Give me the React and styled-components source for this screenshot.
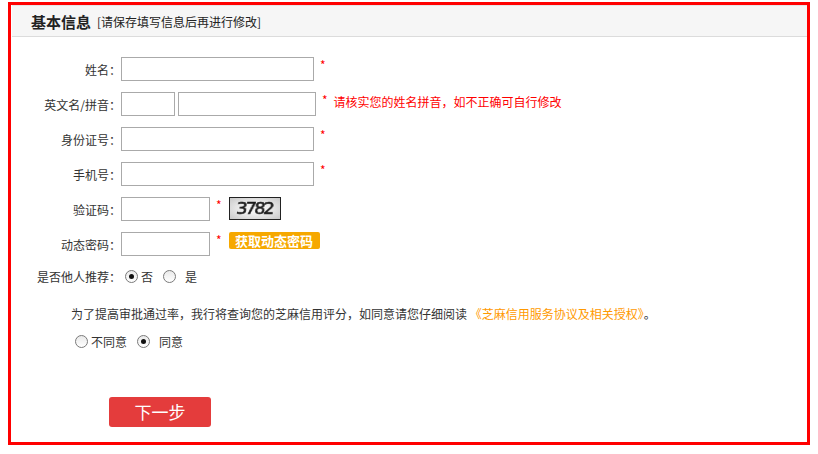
import React from "react";
import styled, { createGlobalStyle } from "styled-components";

const GlobalStyle = createGlobalStyle`
  body {
    margin: 0;
    font-family: "Noto Sans CJK SC", "Liberation Sans", sans-serif;
    font-size: 12px;
    color: #333;
    background: #fff;
  }
`;

const fields = [
  { label: "姓名：", width: 193 },
  { label: "身份证号：", width: 193 },
  { label: "手机号：", width: 193 },
];

const App = () => {
  return (
    <Page>
      <GlobalStyle />
      <Frame>
        <Header>
          <Title>基本信息</Title>
          <Note>[请保存填写信息后再进行修改]</Note>
        </Header>

        <Form>
          <Row>
            <Label>{fields[0].label}</Label>
            <Input $w={193} />
            <Star>*</Star>
          </Row>

          <Row>
            <Label>英文名/拼音：</Label>
            <Input $w={54} />
            <Input $w={138} $ml={3} />
            <Star>*</Star>
            <Hint>请核实您的姓名拼音，如不正确可自行修改</Hint>
          </Row>

          {fields.slice(1).map((f) => (
            <Row key={f.label}>
              <Label>{f.label}</Label>
              <Input $w={f.width} />
              <Star>*</Star>
            </Row>
          ))}

          <Row>
            <Label>验证码：</Label>
            <Input $w={89} />
            <Star>*</Star>
            <Captcha>
              <CaptchaText>3782</CaptchaText>
            </Captcha>
          </Row>

          <Row $mb={8}>
            <Label>动态密码：</Label>
            <Input $w={89} />
            <Star>*</Star>
            <CodeBtn>获取动态密码</CodeBtn>
          </Row>

          <Row>
            <Label>是否他人推荐：</Label>
            <Option $ml={4}>
              <Radio $checked />
              <OptText $ml={3}>否</OptText>
            </Option>
            <Option $ml={10}>
              <Radio />
              <OptText $ml={9}>是</OptText>
            </Option>
          </Row>

          <Agreement>
            <AgreeText>
              为了提高审批通过率，我行将查询您的芝麻信用评分，如同意请您仔细阅读{" "}
              <Link>《芝麻信用服务协议及相关授权》</Link>。
            </AgreeText>
            <AgreeRow>
              <Option $ml={4}>
                <Radio />
                <OptText $ml={3}>不同意</OptText>
              </Option>
              <Option $ml={10}>
                <Radio $checked />
                <OptText $ml={9}>同意</OptText>
              </Option>
            </AgreeRow>
          </Agreement>

          <NextBtn>下一步</NextBtn>
        </Form>
      </Frame>
    </Page>
  );
};

export default App;

const Page = styled.div`
  padding: 2px 8px 0;
`;

const Frame = styled.div`
  width: 802px;
  height: 443px;
  box-sizing: border-box;
  border: 3px solid #ff0000;
`;

const Header = styled.div`
  height: 30px;
  margin-left: 1px;
  padding-left: 19px;
  display: flex;
  align-items: center;
  background: #f6f6f6;
  border-top: 1px solid #e6e6e6;
  border-bottom: 1px solid #dcdcdc;
`;

const Title = styled.span`
  font-size: 15px;
  font-weight: bold;
  color: #222;
`;

const Note = styled.span`
  margin-left: 6px;
  font-size: 12px;
  color: #222;
`;

const Form = styled.div`
  padding-top: 20px;
`;

const Row = styled.div`
  display: flex;
  align-items: center;
  height: 24px;
  margin-bottom: ${(p) => (p.$mb !== undefined ? p.$mb : 11)}px;
`;

const Label = styled.div`
  width: 110px;
  text-align: right;
  color: #333;
  white-space: nowrap;
`;

const Input = styled.input`
  width: ${(p) => p.$w}px;
  height: 24px;
  margin: 0 0 0 ${(p) => p.$ml || 0}px;
  padding: 0 4px;
  box-sizing: border-box;
  border: 1px solid #aaa;
  outline: none;
  font-size: 12px;
`;

const Star = styled.span`
  align-self: flex-start;
  margin: 2px 0 0 6px;
  color: #f00;
  font-size: 12px;
  line-height: 12px;
`;

const Hint = styled.span`
  margin: -6px 0 0 6px;
  color: #f00;
  font-size: 12px;
`;

const Captcha = styled.div`
  align-self: flex-start;
  margin-left: 7px;
  width: 52px;
  height: 23px;
  box-sizing: border-box;
  border: 1px solid #222;
  background: radial-gradient(ellipse at center, #f4f4f4 30%, #c8c8c8 100%);
  display: flex;
  align-items: center;
  justify-content: center;
  overflow: hidden;
`;

const CaptchaText = styled.span`
  font-family: "DejaVu Sans", sans-serif;
  font-size: 16px;
  letter-spacing: -2px;
  color: #1a1a1a;
  -webkit-text-stroke: 0.6px #1a1a1a;
  transform: skewX(-6deg) scaleX(1.1);
  filter: blur(0.5px);
`;

const CodeBtn = styled.div`
  align-self: flex-start;
  margin-left: 7px;
  width: 91px;
  height: 17px;
  line-height: 17px;
  text-align: center;
  background: #f6a800;
  border-radius: 2px;
  color: #fff;
  font-size: 13px;
  font-weight: bold;
  white-space: nowrap;
`;

const Option = styled.label`
  display: flex;
  align-items: center;
  margin-left: ${(p) => p.$ml || 0}px;
`;

const Radio = styled.span`
  position: relative;
  width: 13px;
  height: 13px;
  box-sizing: border-box;
  border-radius: 50%;
  border: 1px solid #7a7a7a;
  background: linear-gradient(#e9e9e9, #fff);

  &::after {
    content: "";
    display: ${(p) => (p.$checked ? "block" : "none")};
    position: absolute;
    left: 3px;
    top: 3px;
    width: 5px;
    height: 5px;
    border-radius: 50%;
    background: #111;
  }
`;

const OptText = styled.span`
  margin-left: ${(p) => p.$ml || 0}px;
  color: #333;
`;

const Agreement = styled.div`
  padding: 5px 0 0 60px;
`;

const AgreeText = styled.div`
  line-height: 20px;
  color: #333;
`;

const Link = styled.span`
  color: #ff9900;
`;

const AgreeRow = styled.div`
  display: flex;
  align-items: center;
  height: 20px;
  margin-top: 7px;
`;

const NextBtn = styled.div`
  margin: 46px 0 0 98px;
  width: 102px;
  height: 30px;
  line-height: 30px;
  text-align: center;
  background: #e43c3c;
  border-radius: 3px;
  color: #fff;
  font-size: 17px;
`;
